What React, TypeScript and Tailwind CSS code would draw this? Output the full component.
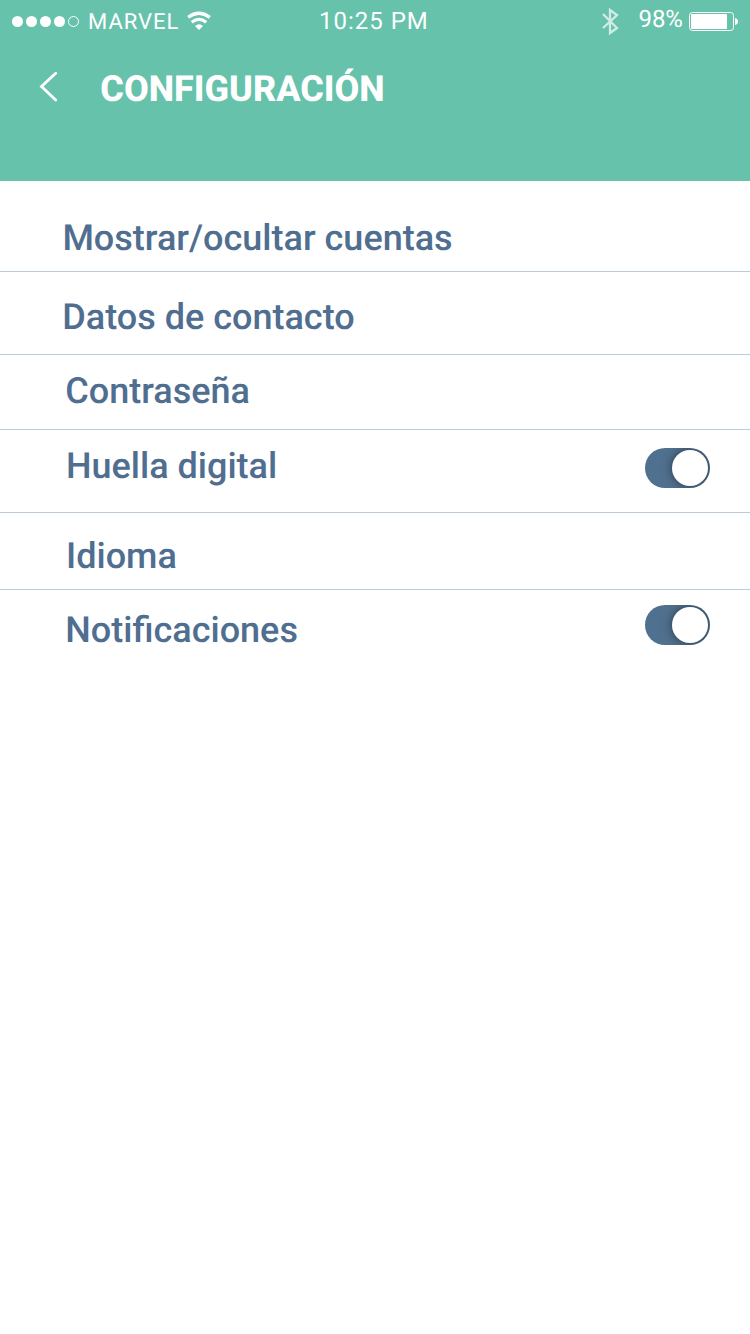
const rows = [
  { label: "Mostrar/ocultar cuentas", box: "h-[91px] pl-[62.4px] pt-[36px]" },
  { label: "Datos de contacto", box: "h-[83px] pl-[62.3px] pt-[24px]" },
  { label: "Contraseña", box: "h-[75px] pl-[65.3px] pt-[15px]" },
  { label: "Huella digital", box: "h-[83px] pl-[66px] pt-[15px]", toggle: "mt-[3px]" },
  { label: "Idioma", box: "h-[77px] pl-[66px] pt-[22px]" },
  { label: "Notificaciones", box: "h-[80px] pl-[65.3px] pt-[19px] border-b-0", toggle: "-mt-[4px]" },
];

function Toggle({ className }: { className: string }) {
  return (
    <div className={`flex h-[40px] w-[65px] items-center justify-end overflow-hidden rounded-full bg-[#50708f] pr-[2px] ${className}`}>
      <div className="size-[36px] rounded-full bg-white shadow-[0_0_10px_rgba(0,0,0,0.5)]" />
    </div>
  );
}

export default function App() {
  return (
    <div className="flex h-[1334px] w-[750px] flex-col bg-white font-['Roboto',sans-serif] [text-rendering:geometricPrecision]">
      <header className="h-[181px] bg-[#67c2ac] text-white">
        <div className="flex h-[42px] items-start whitespace-nowrap">
          <svg width="80" height="42" viewBox="0 0 80 42" fill="#fff">
            <circle cx="17.5" cy="21.5" r="5.5" />
            <circle cx="31.5" cy="21.5" r="5.5" />
            <circle cx="45.5" cy="21.5" r="5.5" />
            <circle cx="59.5" cy="21.5" r="5.5" />
            <circle cx="73.5" cy="21.5" r="5" fill="none" stroke="#fff" />
          </svg>
          <span className="ml-[8px] mt-[7px] w-[99px] text-[22px] leading-[32px] tracking-[1px]">MARVEL</span>
          <svg width="24" height="42" viewBox="0 0 24 42" fill="none" stroke="#fff" strokeWidth="3.3">
            <path d="M1.200 17.300Q11.800 9.300 22.800 17.300M4.800 22.300Q12 16.500 19.200 22.300" />
            <path d="M12 30L8 26Q12 22.500 16 26Z" fill="#fff" stroke="none" />
          </svg>
          <span className="ml-[108px] mt-[5px] w-[282px] text-[24px] leading-[32px] tracking-[1px]">10:25 PM</span>
          <svg width="18" height="42" viewBox="0 0 18 42" fill="none" stroke="#fff" strokeWidth="2.3" opacity=".7">
            <path d="M2 14L16 28L9 33V10L16 15L2 28" />
          </svg>
          <span className="ml-[19.4px] mt-[3px] w-[50.6px] text-[24px] leading-[32px]">98%</span>
          <svg width="50" height="42" viewBox="0 0 50 42" fill="#fff">
            <rect x=".5" y="12.500" width="44" height="18" rx="3" fill="none" stroke="#fff" />
            <rect x="2" y="14" width="36" height="15" rx="1" />
            <path d="M46 18Q49 18.500 49 21.500T46 25Z" />
          </svg>
        </div>
        <div className="flex items-start pl-[39px] pt-[24px]">
          <svg width="20" height="42" viewBox="0 0 20 42" fill="none" stroke="#fff" strokeWidth="2.800" strokeLinecap="round">
            <path d="M16.700 7.300L2.500 20.500L16.700 34" />
          </svg>
          <h1 className="ml-[41.3px] mt-px text-[36px] font-extrabold leading-[44px]">CONFIGURACIÓN</h1>
        </div>
      </header>
      <main>
        {rows.map((row) => (
          <div key={row.label} className={`flex items-start justify-between border-b border-[#bccbd5] pr-[40px] ${row.box}`}>
            <span className="text-[36px] font-medium leading-[42px] text-[#4f6e90]">{row.label}</span>
            {row.toggle && <Toggle className={row.toggle} />}
          </div>
        ))}
      </main>
    </div>
  );
}
